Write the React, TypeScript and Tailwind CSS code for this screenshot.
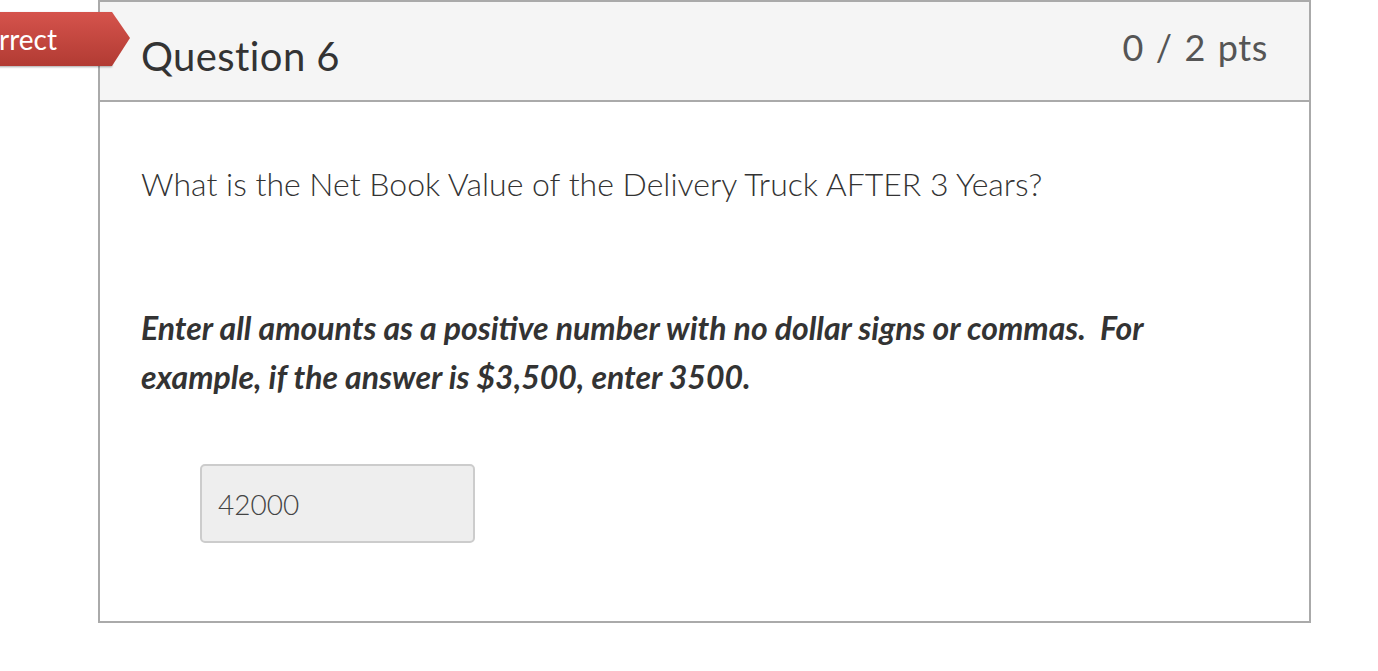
import React from 'react';

const font = { fontFamily: 'Lato, "Noto Sans", sans-serif' };

const ResultRibbon: React.FC<{ label: string }> = ({ label }) => (
    <div className="absolute left-[-198px] top-[10px] flex h-[54px] w-[228px] items-center">
        <div className="flex h-full flex-1 items-center justify-end bg-gradient-to-b from-[#d5534c] to-[#b23b33] pr-[55px] shadow-[0_1px_2px_rgba(0,0,0,0.35)]">
            <span className="text-[28px] leading-none text-white">{label}</span>
        </div>
        <svg width="18" height="54" viewBox="0 0 18 54" className="block">
            <defs>
                <linearGradient id="rib" x1="0" y1="0" x2="0" y2="1">
                    <stop offset="0" stopColor="#d5534c" />
                    <stop offset="1" stopColor="#b23b33" />
                </linearGradient>
            </defs>
            <polygon points="0,0 18,26 0,54" fill="url(#rib)" />
        </svg>
    </div>
);

export default function App() {
    return (
        <div className="min-h-screen bg-white text-[#333]" style={font}>
            <div className="relative ml-[98px] w-[1213px] border-2 border-[#aaa]">
                <ResultRibbon label="Incorrect" />

                {/* header */}
                <div className="flex h-[100px] items-start justify-between border-b-2 border-[#aaa] bg-[#f5f5f5] pl-[41px] pr-[41px]">
                    <h2 className="pt-[34px] text-[40px] leading-none font-normal tracking-[0.4px] text-[#333]">Question 6</h2>
                    <div className="pt-[27px] text-[36px] leading-none tracking-[0.6px] text-[#555]" style={{ wordSpacing: '2px' }}>0 / 2 pts</div>
                </div>

                {/* body */}
                <div className="h-[519px] px-[41px] pt-[66px]">
                    <p className="text-[32px] leading-[32px] font-light text-[#333]">
                        What is the Net Book Value of the Delivery Truck AFTER 3 Years?
                    </p>
                    <p className="mt-[103px] max-w-[1040px] text-[32px] leading-[49px] font-bold italic text-[#333]">
                        Enter all amounts as a positive number with no dollar signs or commas.&nbsp; For example, if the answer is $3,500, enter 3500.
                    </p>
                    <div className="ml-[59px] mt-[63px] flex h-[79px] w-[275px] items-center rounded-[5px] border-2 border-[#ccc] bg-[#eee] px-[16px]">
                        <span className="text-[28px] font-light text-[#444]">42000</span>
                    </div>
                </div>
            </div>
        </div>
    );
}
